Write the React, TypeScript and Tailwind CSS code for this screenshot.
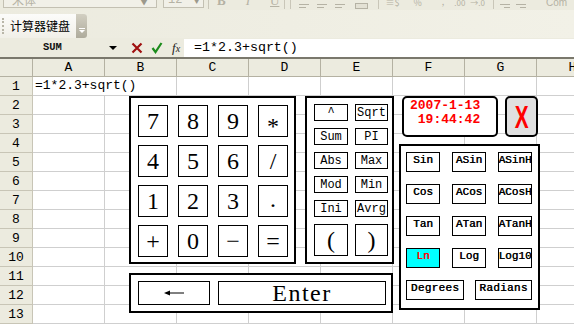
import React from 'react';

const cols = ['A', 'B', 'C', 'D', 'E', 'F', 'G', 'H'];
const rows = Array.from({ length: 13 }, (_, i) => i + 1);

const keypad = ['7', '8', '9', '*', '4', '5', '6', '/', '1', '2', '3', '.', '+', '0', '−', '='];
const funcs = ['^', 'Sqrt', 'Sum', 'PI', 'Abs', 'Max', 'Mod', 'Min', 'Ini', 'Avrg'];
const sci = ['Sin', 'ASin', 'ASinH', 'Cos', 'ACos', 'ACosH', 'Tan', 'ATan', 'ATanH', 'Ln', 'Log', 'Log10'];

function TopStrip() {
  // only the lower edge of the formatting toolbar is visible
  return (
    <div className="h-[10px] bg-[#ecebdf] flex items-end overflow-hidden text-[#b5b2a4] font-['Noto_Sans_CJK_SC',sans-serif]">
      <div className="ml-[3px] mb-[2px] w-[154px] h-[16px] shrink-0 border border-[#c3c0b2] bg-[#f1f0e8] flex items-end justify-between px-[8px] text-[12px] leading-[14px]">
        <span>宋体</span>
        <span className="text-[8px] leading-[10px] text-[#9c998c]">▼</span>
      </div>
      <div className="ml-[6px] mb-[2px] w-[41px] h-[16px] shrink-0 border border-[#c3c0b2] bg-[#f1f0e8] flex items-end justify-between px-[4px] text-[12px] leading-[14px] font-['Liberation_Mono']">
        <span>12</span>
        <span className="text-[8px] leading-[10px] text-[#9c998c]">▼</span>
      </div>
      <div className="ml-[4px] mb-[1px] w-px h-[14px] bg-[#c9c6b8] shrink-0" />
      <div className="ml-[8px] mb-[2px] text-[13px] leading-[14px] font-bold font-['Liberation_Serif'] shrink-0">B</div>
      <div className="ml-[20px] mb-[2px] text-[13px] leading-[14px] italic font-['Liberation_Serif'] shrink-0">I</div>
      <div className="ml-[20px] mb-[2px] text-[13px] leading-[14px] underline font-['Liberation_Serif'] shrink-0">U</div>
      <div className="ml-[5px] mb-[1px] w-px h-[14px] bg-[#c9c6b8] shrink-0" />
      <div className="ml-[5px] mb-[1px] w-px h-[14px] bg-[#c9c6b8] shrink-0" />
      {[0, 1, 2].map(i => (
        <div key={i} className="ml-[8px] mb-[2px] w-[10px] flex flex-col gap-[2px] shrink-0">
          <div className="h-px bg-[#b5b2a4]" />
          <div className="h-px bg-[#b5b2a4] w-[7px]" />
        </div>
      ))}
      <div className="ml-[10px] mb-[1px] w-[13px] h-[6px] border border-[#b5b2a4] bg-[#e3e1d4] shrink-0" />
      <div className="ml-[10px] mb-[1px] w-px h-[14px] bg-[#c9c6b8] shrink-0" />
      <div className="ml-[6px] mb-[2px] text-[9px] leading-[10px] shrink-0">≡$</div>
      <div className="ml-[14px] mb-[2px] text-[9px] leading-[10px] shrink-0">%</div>
      <div className="ml-[20px] mb-[3px] text-[9px] leading-[10px] shrink-0">,</div>
      <div className="ml-[10px] mb-[2px] text-[8px] leading-[10px] shrink-0">.00</div>
      <div className="ml-[5px] mb-[2px] text-[8px] leading-[10px] shrink-0">→.0</div>
      <div className="ml-[8px] mb-[1px] w-px h-[14px] bg-[#c9c6b8] shrink-0" />
      {[0, 1].map(i => (
        <div key={i} className="ml-[6px] mb-[2px] w-[10px] flex flex-col gap-[2px] shrink-0">
          <div className="h-px bg-[#b5b2a4]" />
          <div className="h-px bg-[#b5b2a4] w-[6px] ml-[4px]" />
        </div>
      ))}
      <div className="ml-[20px] mb-[2px] text-[10px] leading-[10px] font-['Liberation_Sans'] shrink-0">Com</div>
    </div>
  );
}

function Toolbar() {
  return (
    <div className="h-[28px] bg-gradient-to-r from-[#ecebdf] to-[#f2f1e7] flex items-end">
      <div className="h-[24px] w-[87px] flex rounded-r-[3px] overflow-hidden bg-gradient-to-b from-[#fcfcfa] to-[#f1f0e8]">
        <div className="w-[4px] ml-[2px] mt-[4px] h-[16px] border-l-2 border-dotted border-[#b9b6a8]" />
        <span className="ml-[4px] text-[12px] leading-[24px] text-black font-['Noto_Sans_CJK_SC',sans-serif]">计算器键盘</span>
        <div className="ml-auto w-[11px] h-full bg-gradient-to-b from-[#d2cfc2] to-[#aeab9c] flex flex-col items-center justify-end pb-[5px]">
          <div className="w-[6px] h-px bg-white mb-px" />
          <div className="w-0 h-0 border-l-[3px] border-r-[3px] border-t-[3px] border-l-transparent border-r-transparent border-t-white" />
        </div>
      </div>
    </div>
  );
}

function FormulaBar() {
  return (
    <div className="h-[21px] bg-[#ecebdf] border-b-2 border-[#7a786c] flex items-center">
      <div className="w-[122px] h-full flex items-center relative">
        <span className="ml-[43px] text-[10.5px] font-bold text-[#111] font-['Liberation_Mono']">SUM</span>
        <div className="ml-auto mr-[5px] w-0 h-0 border-l-[4px] border-r-[4px] border-t-[4px] border-l-transparent border-r-transparent border-t-black" />
      </div>
      <svg width="12" height="12" viewBox="0 0 12 12" className="ml-[9px]">
        <path d="M1.5 1.5 L10.5 10.5 M10.5 1.5 L1.5 10.5" stroke="#a01010" strokeWidth="2.2" />
      </svg>
      <svg width="12" height="12" viewBox="0 0 12 12" className="ml-[8px]">
        <path d="M1.5 6 L4.5 10 L10.5 1" stroke="#1c8c1c" strokeWidth="2.2" fill="none" />
      </svg>
      <span className="ml-[9px] italic font-['Liberation_Serif'] text-[13px] leading-none text-[#222]">
        f<span className="text-[10px]">x</span>
      </span>
      <div className="ml-[4px] flex-1 h-[18px] bg-white flex items-center pl-[10px] font-['Liberation_Mono'] text-[13.3px] text-black">
        =1*2.3+sqrt()
      </div>
    </div>
  );
}

function Sheet() {
  return (
    <div className="flex flex-col font-['Liberation_Mono'] text-[13px] text-black">
      <div className="flex h-[18px]">
        <div className="w-[33px] shrink-0 bg-[#ecebdf] border-r border-b border-[#b4b1a2]" />
        {cols.map(c => (
          <div key={c} className="w-[72px] shrink-0 bg-[#ecebdf] border-r border-b border-[#b4b1a2] text-center leading-[17px]">
            {c}
          </div>
        ))}
      </div>
      {rows.map(r => (
        <div key={r} className="flex h-[19px]">
          <div className="w-[33px] shrink-0 bg-[#ecebdf] border-r border-b border-[#c8c5b6] text-center leading-[19px]">
            {r}
          </div>
          {cols.map((c, i) => (
            <div
              key={c}
              className={`w-[72px] shrink-0 border-b border-[#cfcfcf] leading-[18px] whitespace-nowrap ${
                r === 1 && i === 0 ? 'pl-[2px] relative z-10' : 'border-r'
              }`}
            >
              {r === 1 && i === 0 ? '=1*2.3+sqrt()' : ''}
            </div>
          ))}
        </div>
      ))}
    </div>
  );
}

function Calculator() {
  return (
    <>
      {/* number keypad */}
      <div className="absolute left-[129px] top-[96px] w-[167px] h-[168px] bg-white border-2 border-black pl-[7px] pt-[7px]">
        <div className="grid grid-cols-[repeat(4,30px)] auto-rows-[32px] gap-x-[10px] gap-y-[8px]">
          {keypad.map(k => (
            <div key={k} className="border border-black flex items-center justify-center font-['Liberation_Serif'] text-[24px] leading-none">
              {k === '*' ? <span className="translate-y-[5px]">*</span> : k === '.' ? <span className="-translate-y-[2px]">.</span> : k}
            </div>
          ))}
        </div>
      </div>

      {/* function panel */}
      <div className="absolute left-[305px] top-[96px] w-[89px] h-[168px] bg-white border-2 border-black pl-[7px] pt-[6px]">
        <div className="grid grid-cols-[34px_33px] auto-rows-[17px] gap-x-[7px] gap-y-[7px] font-['Liberation_Mono'] text-[12px]">
          {funcs.map(f => (
            <div key={f} className="border border-black flex items-center justify-center leading-none">
              {f}
            </div>
          ))}
          <div className="row-span-2 h-[32px] border border-black flex items-center justify-center font-['Liberation_Serif'] text-[24px]">(</div>
          <div className="row-span-2 h-[32px] border border-black flex items-center justify-center font-['Liberation_Serif'] text-[24px]">)</div>
        </div>
      </div>

      {/* date / time */}
      <div className="absolute left-[402px] top-[96px] w-[96px] h-[41px] bg-white border-2 border-black rounded-[5px] pl-[6px] pt-[1px] font-['Liberation_Mono'] font-bold text-[13px] leading-[14px] text-[#ff0000] whitespace-pre">
        <div>2007-1-13</div>
        <div> 19:44:42</div>
      </div>

      {/* close */}
      <div className="absolute left-[505px] top-[96px] w-[33px] h-[41px] bg-[#e0e0e0] border-2 border-black rounded-[5px] flex items-center justify-center">
        <span className="scale-x-[0.65] font-['Liberation_Sans'] font-bold text-[32px] leading-none text-[#ff0000]">X</span>
      </div>

      {/* scientific panel */}
      <div className="absolute left-[399px] top-[144px] w-[141px] h-[166px] bg-white border-2 border-black pl-[5px] pt-[6px] font-['Liberation_Mono'] text-[11px] [text-shadow:0.4px_0_0_currentColor]">
        <div className="grid grid-cols-[repeat(3,34px)] auto-rows-[20px] gap-x-[12px] gap-y-[12px]">
          {sci.map(s => (
            <div
              key={s}
              className={`border border-black flex justify-center pt-[1px] leading-[13px] ${
                s === 'Ln' ? 'bg-[#00ffff] text-[#ff0000]' : 'text-black'
              }`}
            >
              {s}
            </div>
          ))}
        </div>
        <div className="flex gap-x-[11px] mt-[12px]">
          <div className="w-[58px] h-[20px] border border-black flex justify-center pt-[1px] leading-[13px] tracking-[0.3px]">Degrees</div>
          <div className="w-[57px] h-[20px] border border-black flex justify-center pt-[1px] leading-[13px] tracking-[0.3px]">Radians</div>
        </div>
      </div>

      {/* backspace / enter */}
      <div className="absolute left-[129px] top-[273px] w-[264px] h-[40px] bg-white border-2 border-black pl-[7px] pt-[6px] flex gap-x-[8px]">
        <div className="w-[72px] h-[24px] border border-black flex items-center justify-center">
          <svg width="20" height="6" viewBox="0 0 20 6">
            <path d="M0 3 L6 0.5 L6 5.5 Z" fill="black" />
            <path d="M4 3 L20 3" stroke="black" strokeWidth="1" />
          </svg>
        </div>
        <div className="w-[168px] h-[24px] border border-black flex items-center justify-center font-['Liberation_Serif'] text-[24px] leading-none tracking-[1.5px]">
          Enter
        </div>
      </div>
    </>
  );
}

export default function App() {
  return (
    <div className="w-[574px] h-[324px] overflow-hidden relative bg-white">
      <TopStrip />
      <Toolbar />
      <FormulaBar />
      <Sheet />
      <Calculator />
    </div>
  );
}
